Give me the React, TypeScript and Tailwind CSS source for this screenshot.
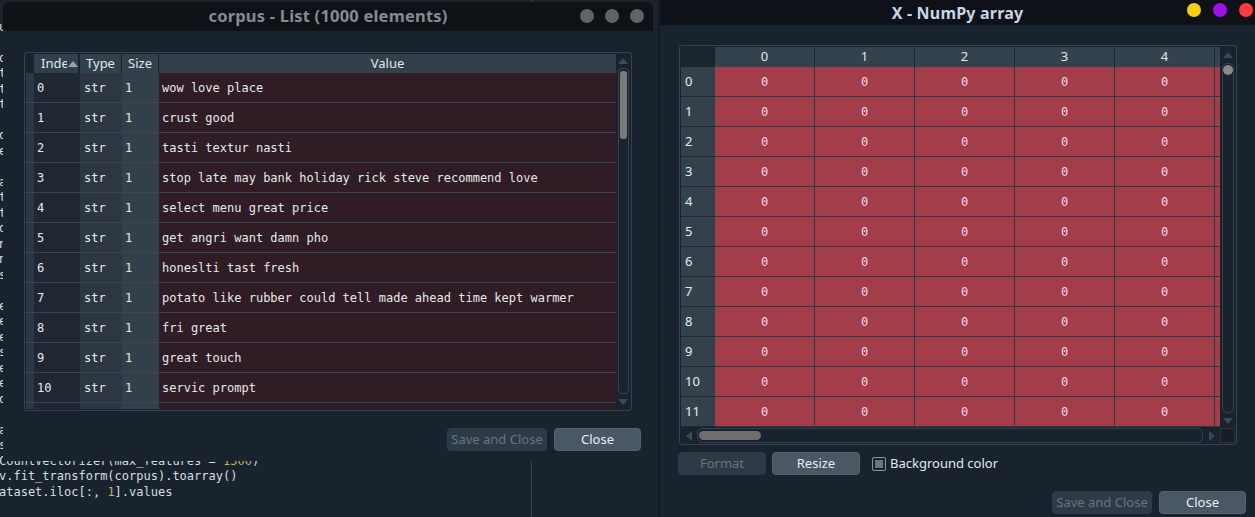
import React from 'react';

const mono = "font-['DejaVu_Sans_Mono',monospace]";

const script = [
  '# Natural Language Processing',
  '',
  '# Importing the libraries',
  'import numpy as np',
  'import matplotlib.pyplot as plt',
  'import pandas as pd',
  '',
  '# Importing the dataset',
  "dataset = pd.read_csv('Restaurant_Reviews.tsv', delimiter = '\\t', quoting = 3)",
  '',
  '# Cleaning the texts',
  'import re',
  'import nltk',
  "nltk.download('stopwords')",
  'from nltk.corpus import stopwords',
  'from nltk.stem.porter import PorterStemmer',
  'corpus = []',
  'for i in range(0, 1000):',
  "    review = re.sub('[^a-zA-Z]', ' ', dataset['Review'][i])",
  '    review = review.lower()',
  '    review = review.split()',
  '    ps = PorterStemmer()',
  "    review = [ps.stem(word) for word in review if not word in set(stopwords.words('english'))]",
  "    review = ' '.join(review)",
  '    corpus.append(review)',
  '',
  '# Creating the Bag of Words model',
  'from sklearn.feature_extraction.text import CountVectorizer',
];

const corpus = [
  'wow love place',
  'crust good',
  'tasti textur nasti',
  'stop late may bank holiday rick steve recommend love',
  'select menu great price',
  'get angri want damn pho',
  'honeslti tast fresh',
  'potato like rubber could tell made ahead time kept warmer',
  'fri great',
  'great touch',
  'servic prompt',
];

function Editor() {
  // lines under the list window only show their first visible column
  return (
    <div className={`h-full flex flex-col justify-end pb-[17px] ml-[-1px] ${mono} text-[12px] leading-[15.5px] text-[#d6dde3] whitespace-pre`}>
      {script.map((l, i) => (
        <div key={i} className="h-[15.5px]">{l.slice(5, 6)}</div>
      ))}
      <div className="h-[15.5px]">CountVectorizer(max_features = <span className="text-[#c9ad6a]">1500</span>)</div>
      <div className="h-[15.5px]">v.fit_transform(corpus).toarray()</div>
      <div className="h-[15.5px]">ataset.iloc[:, <span className="text-[#c9ad6a]">1</span>].values</div>
    </div>
  );
}

function Dot({ color }: { color: string }) {
  return <div className={`w-[14px] h-[14px] rounded-full ${color}`} />;
}

function Arrow({ dir, color = '#3d4a55' }: { dir: 'up' | 'down' | 'left' | 'right'; color?: string }) {
  const pts = {
    up: '0,6 5,0 10,6',
    down: '0,0 5,6 10,0',
    left: '6,0 0,5 6,10',
    right: '0,0 6,5 0,10',
  }[dir];
  const vertical = dir === 'up' || dir === 'down';
  return (
    <svg width={vertical ? 10 : 6} height={vertical ? 6 : 10} viewBox={vertical ? '0 0 10 6' : '0 0 6 10'}>
      <polygon points={pts} fill={color} />
    </svg>
  );
}

function Btn({ label, w, disabled }: { label: string; w: string; disabled?: boolean }) {
  return (
    <button
      className={`${w} h-[23px] rounded-[4px] text-[13px] leading-none border ${
        disabled
          ? 'bg-[#2d3b46] border-[#2d3b46] text-[#69757f]'
          : 'bg-[#4a5865] border-[#55636e] text-[#e8edf1]'
      }`}
    >
      {label}
    </button>
  );
}

function ListWindow() {
  return (
    <div className="absolute left-[3px] top-[2px] w-[650px] h-[459px] flex flex-col bg-[#19232d] rounded-t-[6px]">
      <div className="relative h-[29px] shrink-0 bg-[#0e1116] rounded-t-[6px] flex items-center justify-center">
        <span className="text-[16.5px] font-bold text-[#858b92] tracking-[0.2px]">corpus - List (1000 elements)</span>
        <div className="absolute right-[9px] top-[7px] flex gap-[11px]">
          <Dot color="bg-[#606468]" />
          <Dot color="bg-[#606468]" />
          <Dot color="bg-[#606468]" />
        </div>
      </div>

      <div className="flex-1 flex flex-col pl-[21px] pt-[21px]">
        <div className="w-[608px] h-[359px] border border-[#36434e] rounded-[3px] p-[1px] flex">
          <div className="w-[590px] flex flex-col">
            {/* header */}
            <div className="h-[19px] shrink-0 flex text-[13px] text-[#e1e7ec]">
              <div className="w-[8px]" />
              <div className="w-[46px] bg-[#31404b] border-r-2 border-[#19232d] flex items-center pl-[7px]">
                <span className="w-[26px] overflow-hidden whitespace-nowrap">Index</span>
                <span className="ml-[1px]"><Arrow dir="up" color="#9aa3ab" /></span>
              </div>
              <div className="w-[42px] bg-[#31404b] border-r border-[#19232d] flex items-center justify-center">Type</div>
              <div className="w-[37px] bg-[#31404b] border-r border-[#19232d] flex items-center justify-center">Size</div>
              <div className="flex-1 bg-[#31404b] flex items-center justify-center">Value</div>
            </div>
            {/* rows */}
            <div className={`flex-1 overflow-hidden ${mono} text-[12px] text-[#e6e9ec]`}>
              {[...corpus, ''].map((v, i) => {
                const last = i === corpus.length;
                return (
                  <div key={i} className="h-[30px] flex">
                    <div className="w-[8px] bg-[#2c3843] border-b border-[#3a4752]" />
                    <div className="w-[46px] bg-[#1f2832] border-b border-[#3a4752] flex items-center pl-[3px]">{last ? '' : i}</div>
                    <div className="w-[42px] bg-[#2c3741] border-b border-[#3a4752] flex items-center pl-[4px]">{last ? '' : 'str'}</div>
                    <div className="w-[37px] bg-[#333f49] border-b border-[#3a4752] flex items-center pl-[3px]">{last ? '' : '1'}</div>
                    <div className="flex-1 bg-[#2f1c25] border-b border-[#3a4752] flex items-center pl-[3px] whitespace-pre">{v}</div>
                  </div>
                );
              })}
            </div>
          </div>
          {/* scrollbar */}
          <div className="w-[14px] flex flex-col items-center">
            <div className="h-[14px] flex items-center justify-center"><Arrow dir="up" /></div>
            <div className="flex-1 w-[11px] border border-[#36434e] rounded-[4px] flex justify-center pt-[2px]">
              <div className="w-[7px] h-[68px] bg-[#7b7b7b] rounded-[3px]" />
            </div>
            <div className="h-[15px] flex items-center justify-center"><Arrow dir="down" /></div>
          </div>
        </div>

        <div className="mt-[17px] flex justify-end gap-[7px] pr-[12px]">
          <Btn label="Save and Close" w="w-[100px]" disabled />
          <Btn label="Close" w="w-[87px]" />
        </div>
      </div>
    </div>
  );
}

function ArrayWindow() {
  const cols = [0, 1, 2, 3, 4];
  const rows = Array.from({ length: 12 }, (_, i) => i);
  return (
    <div className="absolute left-[658px] top-0 w-[597px] h-[517px] flex flex-col bg-[#19232d] border-l-2 border-[#131a21]">
      <div className="relative h-[25px] shrink-0 bg-[#0e1117] flex items-center justify-center">
        <span className="text-[16px] font-bold text-[#c9d5e2] tracking-[0.2px]">X - NumPy array</span>
        <div className="absolute right-[2px] top-[3px] flex gap-[12px]">
          <Dot color="bg-[#f7cf0f]" />
          <Dot color="bg-[#a10ee6]" />
          <Dot color="bg-[#fb3c3c]" />
        </div>
      </div>

      <div className="flex-1 flex flex-col pl-[19px] pt-[20px]">
        <div className="w-[558px] h-[400px] border border-[#36434e] rounded-[3px] p-[1px] flex flex-col">
          <div className="h-[381px] flex">
            <div className="w-[539px] overflow-hidden flex flex-col">
              <div className="h-[20px] shrink-0 flex text-[13px] text-[#e1e7ec]">
                <div className="w-[34px] shrink-0 bg-[#1b252e]" />
                {cols.map(c => (
                  <div key={c} className="w-[100px] shrink-0 bg-[#33424d] border-r border-[#1f2a33] flex items-center justify-center">{c}</div>
                ))}
                <div className="w-[5px] shrink-0 bg-[#33424d]" />
              </div>
              {rows.map(r => (
                <div key={r} className="h-[30px] shrink-0 flex">
                  <div className="w-[34px] shrink-0 bg-[#33414c] border-b border-[#1f2a33] flex items-center pl-[4px] text-[13px] text-[#e6edf2]">{r}</div>
                  {cols.map(c => (
                    <div key={c} className={`w-[100px] shrink-0 bg-[#a33d4a] border-r border-b border-[#2c3843] flex items-center justify-center ${mono} text-[12px] text-[#f2d8f2]`}>0</div>
                  ))}
                  <div className="w-[5px] shrink-0 bg-[#a33d4a] border-b border-[#2c3843]" />
                </div>
              ))}
            </div>
            <div className="w-[15px] flex flex-col items-center">
              <div className="h-[16px] flex items-center justify-center"><Arrow dir="up" /></div>
              <div className="flex-1 w-[12px] border border-[#36434e] rounded-[5px] flex justify-center pt-[1px]">
                <div className="w-[10px] h-[10px] bg-[#8b8b8b] rounded-full" />
              </div>
              <div className="h-[15px] flex items-center justify-center"><Arrow dir="down" /></div>
            </div>
          </div>
          <div className="h-[15px] flex">
            <div className="w-[16px] flex items-center justify-center"><Arrow dir="left" /></div>
            <div className="w-[506px] border border-[#36434e] rounded-[5px] flex items-center pl-[1px]">
              <div className="w-[62px] h-[9px] bg-[#6e6e6e] rounded-full" />
            </div>
            <div className="w-[17px] flex items-center justify-center"><Arrow dir="right" /></div>
            <div className="w-[15px] bg-[#161e26] border border-[#27323c]" />
          </div>
        </div>

        <div className="mt-[7px] flex items-center ml-[-1px]">
          <Btn label="Format" w="w-[88px]" disabled />
          <div className="w-[6px]" />
          <Btn label="Resize" w="w-[88px]" />
          <div className="ml-[12px] w-[14px] h-[14px] border border-[#8d969e] rounded-[2px] flex items-center justify-center">
            <div className="w-[8px] h-[8px] bg-[#6a747c]" />
          </div>
          <span className="ml-[4px] text-[13px] text-[#e3e9ee]">Background color</span>
        </div>

        <div className="mt-[16px] flex justify-end gap-[7px] pr-[9px]">
          <Btn label="Save and Close" w="w-[100px]" disabled />
          <Btn label="Close" w="w-[87px]" />
        </div>
      </div>
    </div>
  );
}

export default function App() {
  return (
    <div className="relative w-[1255px] h-[517px] overflow-hidden bg-[#19232d] font-['Noto_Sans',sans-serif]">
      <div className="absolute left-[531px] top-0 w-px h-full bg-[#3b4651]" />
      <Editor />
      <ListWindow />
      <ArrayWindow />
    </div>
  );
}
